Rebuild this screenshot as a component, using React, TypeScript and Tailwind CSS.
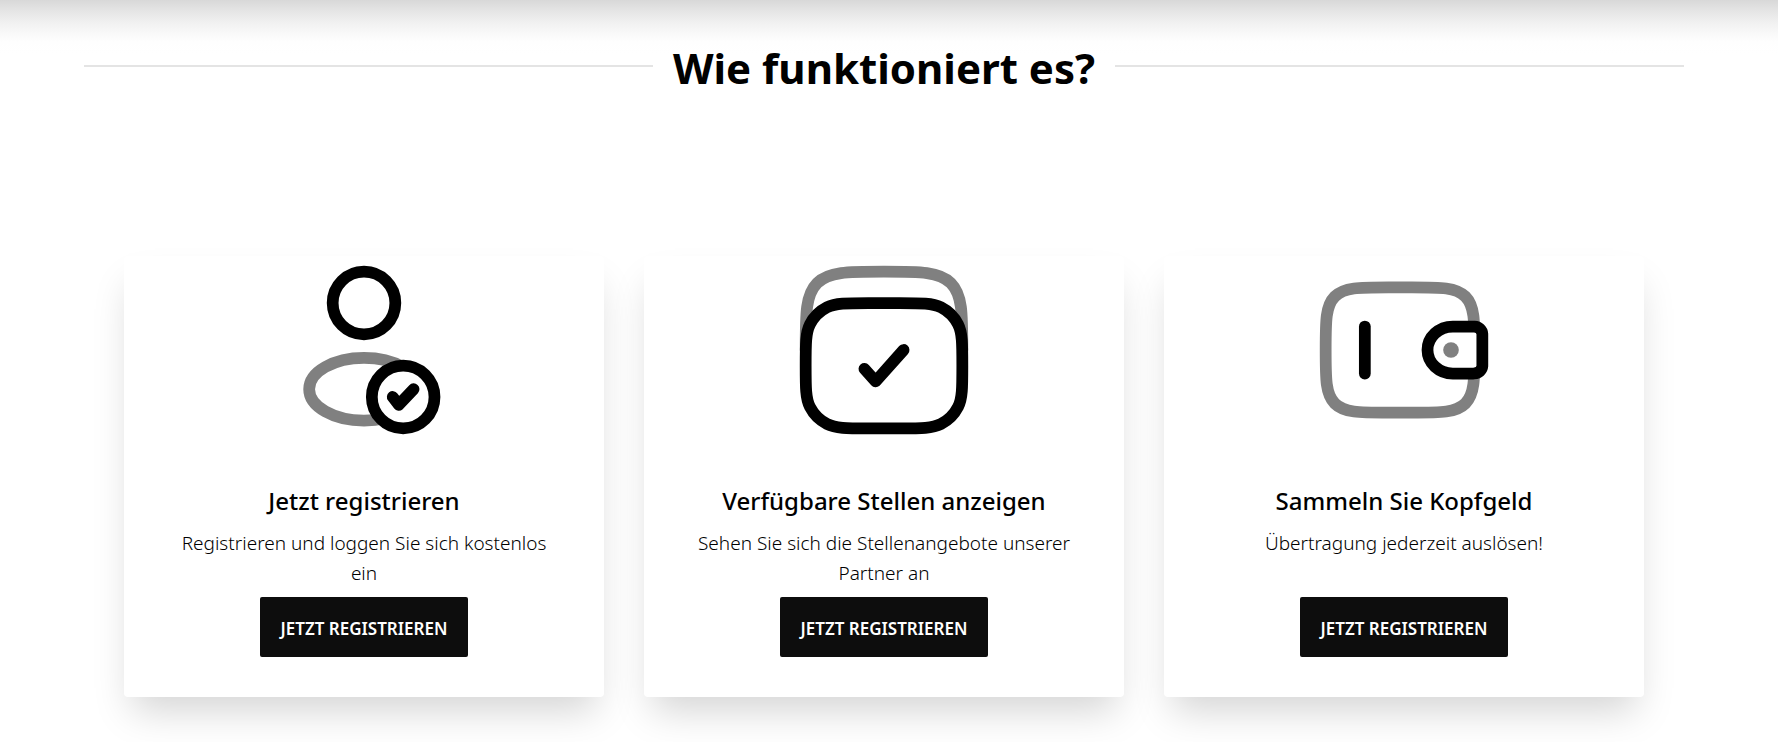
import type { ReactNode } from 'react'

function UserCheckIcon() {
  return (
    <svg viewBox="0 0 24 24" fill="none" stroke="#000" strokeWidth="1.5" strokeLinecap="round" strokeLinejoin="round" className="w-[188px] h-[188px]" aria-hidden="true">
      <circle cx="12" cy="6" r="4" />
      <ellipse cx="12" cy="17" rx="7" ry="4" stroke="#808080" />
      <circle cx="17" cy="18" r="4" fill="#fff" />
      <path d="M15.67 18L16.45 19L18.33 17" />
    </svg>
  )
}

function JobsIcon() {
  return (
    <svg viewBox="0 0 24 24" fill="none" stroke="#000" strokeWidth="1.5" strokeLinecap="round" strokeLinejoin="round" className="w-[188px] h-[188px]" aria-hidden="true">
      <path stroke="#808080" d="M2 12C2 7.286 2 4.929 3.464 3.464C4.929 2 7.286 2 12 2C16.714 2 19.071 2 20.536 3.464C22 4.929 22 7.286 22 12" />
      <path fill="#fff" d="M2 14C2 11.2 2 9.8 2.545 8.73C3.024 7.789 3.789 7.024 4.73 6.545C5.8 6 7.2 6 10 6H14C16.8 6 18.2 6 19.27 6.545C20.211 7.024 20.976 7.789 21.455 8.73C22 9.8 22 11.2 22 14C22 16.8 22 18.2 21.455 19.27C20.976 20.211 20.211 20.976 19.27 21.455C18.2 22 16.8 22 14 22H10C7.2 22 5.8 22 4.73 21.455C3.789 20.976 3.024 20.211 2.545 19.27C2 18.2 2 16.8 2 14Z" />
      <path d="M9.5 14.4L10.93 16L14.5 12" />
    </svg>
  )
}

function WalletIcon() {
  return (
    <svg viewBox="0 0 24 24" fill="none" stroke="#000" strokeWidth="1.5" strokeLinecap="round" strokeLinejoin="round" className="w-[188px] h-[188px]" aria-hidden="true">
      <path stroke="#808080" d="M10 4H13C16.771 4 18.657 4 19.828 5.172C21 6.343 21 8.229 21 12C21 15.771 21 17.657 19.828 18.828C18.657 20 16.771 20 13 20H10C6.229 20 4.343 20 3.172 18.828C2 17.657 2 15.771 2 12C2 8.229 2 6.343 3.172 5.172C4.343 4 6.229 4 10 4Z" />
      <path fill="#fff" d="M20.833 9H18.231C16.447 9 15 10.343 15 12C15 13.657 16.447 15 18.231 15H20.833C20.917 15 20.958 15 20.994 14.998C21.533 14.965 21.962 14.566 21.998 14.065C22 14.033 22 13.994 22 13.917V10.083C22 10.006 22 9.967 21.998 9.935C21.962 9.434 21.533 9.035 20.994 9.002C20.958 9 20.917 9 20.833 9Z" />
      <path d="M7 9V15" />
      <circle cx="18" cy="12" r="1" fill="#808080" stroke="none" />
    </svg>
  )
}

type Step = {
  icon: ReactNode
  title: string
  text: string
}

const steps: Step[] = [
  {
    icon: <UserCheckIcon />,
    title: 'Jetzt registrieren',
    text: 'Registrieren und loggen Sie sich kostenlos ein',
  },
  {
    icon: <JobsIcon />,
    title: 'Verfügbare Stellen anzeigen',
    text: 'Sehen Sie sich die Stellenangebote unserer Partner an',
  },
  {
    icon: <WalletIcon />,
    title: 'Sammeln Sie Kopfgeld',
    text: 'Übertragung jederzeit auslösen!',
  },
]

function StepCard({ icon, title, text }: Step) {
  return (
    <article className="flex-1 max-w-[480px] flex flex-col items-center px-12 pb-10 bg-white rounded text-center shadow-[0_22px_36px_-8px_rgba(0,0,0,0.17)]">
      {icon}
      <h3 className="mt-10 text-2xl leading-[34px] font-medium text-black">{title}</h3>
      <p className="mt-[10px] min-h-[60px] text-[19px] leading-[30px] font-light text-black">{text}</p>
      <button type="button" className="mt-[9px] w-[208px] h-[60px] pt-1 rounded-xs bg-[#0d0d0d] text-[17px] font-semibold text-white uppercase whitespace-nowrap">
        Jetzt registrieren
      </button>
    </article>
  )
}

export default function App() {
  return (
    <main className="min-h-screen pt-8 pr-[10px] pb-11 bg-white bg-[linear-gradient(to_bottom,#d8d8d8_0px,#e5e5e5_11px,#f1f1f1_23px,#fafafa_35px,#fefefe_42px,#fff_54px)] font-['Noto_Sans',sans-serif]">
      <section className="max-w-[1600px] mx-auto">
        {/* Section heading */}
        <div className="flex items-center gap-5">
          <span className="flex-1 h-[2px] bg-[#e4e4e4]" />
          <h2 className="pt-1 text-[42px] leading-[64px] font-bold text-black">Wie funktioniert es?</h2>
          <span className="flex-1 h-[2px] bg-[#e4e4e4]" />
        </div>

        {/* Steps */}
        <div className="flex gap-10 px-10 mt-[156px]">
          {steps.map((step) => (
            <StepCard key={step.title} {...step} />
          ))}
        </div>
      </section>
    </main>
  )
}
